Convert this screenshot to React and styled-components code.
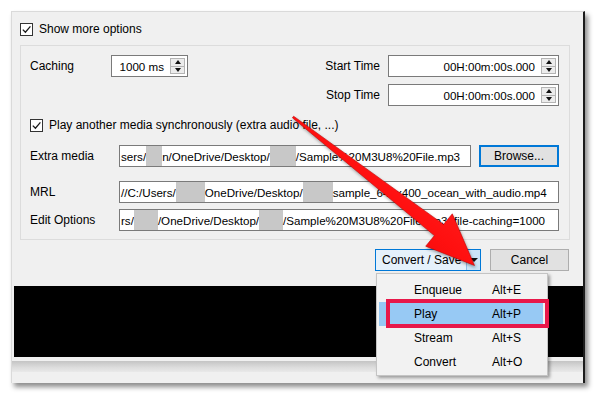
import React from 'react'
import styled, { createGlobalStyle } from 'styled-components'

const App = () => {
    return (
        <Page>
            <GlobalStyle />
            <Window>
                <OptionsRow>
                    <CheckBox checked />
                    <span>Show more options</span>
                </OptionsRow>

                <Group>
                    <TopSection>
                        <CachingRow>
                            <Label $width={81}>Caching</Label>
                            <SpinBox width={77} value='1000 ms' />
                        </CachingRow>
                        <TimeGrid>
                            <TimeLabel>Start Time</TimeLabel>
                            <SpinBox width={171} value='00H:00m:00s.000' />
                            <TimeLabel>Stop Time</TimeLabel>
                            <SpinBox width={171} value='00H:00m:00s.000' />
                        </TimeGrid>
                    </TopSection>

                    <SyncRow>
                        <CheckBox checked />
                        <span>Play another media synchronously (extra audio file, ...)</span>
                    </SyncRow>

                    <FormRow $top={13}>
                        <Label $width={89}>Extra media</Label>
                        <Field>
                            sers/<Redact $w={16} />n/OneDrive/Desktop/<Redact $w={26} />/Sample%20M3U8%20File.mp3
                        </Field>
                        <Button $focused $width={80}>Browse...</Button>
                    </FormRow>

                    <FormRow $top={14}>
                        <Label $width={89}>MRL</Label>
                        <Field>
                            //C:/Users/<Redact $w={29} />OneDrive/Desktop/<Redact $w={30} />sample_640x400_ocean_with_audio.mp4
                        </Field>
                    </FormRow>

                    <FormRow $top={6}>
                        <Label $width={89}>Edit Options</Label>
                        <Field>
                            rs/<Redact $w={24} />/OneDrive/Desktop/<Redact $w={24} />/Sample%20M3U8%20File.mp3 :file-caching=1000
                        </Field>
                    </FormRow>
                </Group>

                <ButtonRow>
                    <Dropdown>
                        <SplitButton>
                            <SplitLabel>Convert / Save</SplitLabel>
                            <SplitArrow><DownTriangle /></SplitArrow>
                        </SplitButton>
                        <Menu>
                            <MenuItem>
                                <span>Enqueue</span><span>Alt+E</span>
                            </MenuItem>
                            <MenuItem $active>
                                <span>Play</span><span>Alt+P</span>
                                <Callout />
                            </MenuItem>
                            <MenuItem>
                                <span>Stream</span><span>Alt+S</span>
                            </MenuItem>
                            <MenuItem>
                                <span>Convert</span><span>Alt+O</span>
                            </MenuItem>
                        </Menu>
                    </Dropdown>
                    <Button $width={79}>Cancel</Button>
                </ButtonRow>

                <VideoArea />
                <StatusBar />
            </Window>

            <PointerArrow />
        </Page>
    )
}

export default App


const CheckBox = ({ checked }) => (
    <Box>
        {checked && (
            <svg width='11' height='11' viewBox='0 0 11 11'>
                <path d='M1.8 5.6 L4.4 8.2 L9.4 2.4' fill='none' stroke='#1a1a1a' strokeWidth='1.3' />
            </svg>
        )}
    </Box>
)

const SpinBox = ({ width, value }) => (
    <SpinFrame style={{ width }}>
        <SpinValue>{value}</SpinValue>
        <SpinButtons>
            <SpinHalf><UpTriangle /></SpinHalf>
            <SpinHalf $bottom><DownTriangle $small /></SpinHalf>
        </SpinButtons>
    </SpinFrame>
)

// the red annotation arrow drawn over the dialog
const PointerArrow = () => (
    <ArrowLayer width='600' height='396' viewBox='0 0 600 396'>
        <defs>
            <linearGradient id='arrowFill' x1='0' y1='1' x2='1' y2='0'>
                <stop offset='0' stopColor='#d80000' />
                <stop offset='0.5' stopColor='#ff1010' />
                <stop offset='1' stopColor='#ff3030' />
            </linearGradient>
        </defs>
        <polygon
            points='293.6,116.2 443.6,224.4 452.3,213.8 474.5,265.5 425.7,246.2 434.4,235.6 292.4,117.8'
            fill='url(#arrowFill)'
            stroke='#c40000'
            strokeWidth='0.6'
            strokeLinejoin='round'
        />
    </ArrowLayer>
)


// STYLED COMPONENTS
const GlobalStyle = createGlobalStyle`
    html, body {
        margin: 0;
        padding: 0;
        background: #ffffff;
    }
    body {
        font-family: "Liberation Sans", Arial, sans-serif;
        font-size: 12px;
        color: #000;
    }
`;

const Page = styled.div`
    position: relative;
    width: 600px;
    height: 396px;
    padding: 11px 0 0 11px;
    box-sizing: border-box;
    overflow: hidden;
    background: #fff;
`;

const Window = styled.div`
    width: 574px;
    height: 372px;
    box-sizing: border-box;
    background: #f0f0f0;
    border-top: 1px solid #dadada;
    border-left: 1px solid #dadada;
    border-right: 2px solid #1c1c1c;
    box-shadow: 3px 4px 5px rgba(0,0,0,0.45);
    display: flex;
    flex-direction: column;
`;

const OptionsRow = styled.div`
    display: flex;
    align-items: center;
    gap: 6px;
    height: 22px;
    padding: 6px 0 0 8px;
`;

const Box = styled.div`
    width: 13px;
    height: 13px;
    box-sizing: border-box;
    border: 1px solid #333;
    background: #fff;
    display: flex;
    align-items: center;
    justify-content: center;
    flex-shrink: 0;
`;

const Group = styled.div`
    margin: 5px 13px 0 8px;
    height: 195px;
    box-sizing: border-box;
    border: 1px solid #dcdcdc;
    padding: 9px 10px 0 9px;
`;

const TopSection = styled.div`
    display: flex;
    justify-content: space-between;
    align-items: flex-start;
`;

const CachingRow = styled.div`
    display: flex;
    align-items: center;
    height: 22px;
`;

const Label = styled.div`
    width: ${p => p.$width}px;
    flex-shrink: 0;
`;

const TimeGrid = styled.div`
    display: grid;
    grid-template-columns: auto 171px;
    grid-auto-rows: 22px;
    column-gap: 8px;
    row-gap: 7px;
    align-items: center;
`;

const TimeLabel = styled.div`
    text-align: right;
`;

const SpinFrame = styled.div`
    height: 22px;
    box-sizing: border-box;
    border: 1px solid #7a7a7a;
    background: #fff;
    display: flex;
    align-items: stretch;
`;

const SpinValue = styled.div`
    flex: 1;
    display: flex;
    align-items: center;
    justify-content: flex-end;
    padding-right: 6px;
    font-size: 11.6px;
`;

const SpinButtons = styled.div`
    width: 13px;
    margin: 2px 2px 2px 0;
    border: 1px solid #b4b4b4;
    background: #ececec;
    display: flex;
    flex-direction: column;
`;

const SpinHalf = styled.div`
    flex: 1;
    display: flex;
    align-items: center;
    justify-content: center;
    border-top: ${p => p.$bottom ? '1px solid #b4b4b4' : 'none'};
`;

const UpTriangle = styled.div`
    width: 0;
    height: 0;
    border-left: 3px solid transparent;
    border-right: 3px solid transparent;
    border-bottom: 4px solid #111;
`;

const DownTriangle = styled.div`
    width: 0;
    height: 0;
    border-left: ${p => p.$small ? 3 : 4}px solid transparent;
    border-right: ${p => p.$small ? 3 : 4}px solid transparent;
    border-top: 4px solid #111;
`;

const SyncRow = styled.div`
    display: flex;
    align-items: center;
    gap: 6px;
    height: 14px;
    margin-top: 12px;
`;

const FormRow = styled.div`
    display: flex;
    align-items: center;
    gap: 0;
    margin-top: ${p => p.$top}px;
    height: 22px;
`;

const Field = styled.div`
    flex: 1;
    height: 22px;
    box-sizing: border-box;
    border: 1px solid #7a7a7a;
    background: #fff;
    display: flex;
    align-items: center;
    overflow: hidden;
    white-space: nowrap;
    font-size: 11.6px;
    padding-left: 1px;
`;

const Redact = styled.span`
    display: inline-block;
    flex-shrink: 0;
    width: ${p => p.$w}px;
    height: 20px;
    background: #c8c8c8;
`;

const Button = styled.div`
    width: ${p => p.$width}px;
    height: 22px;
    box-sizing: border-box;
    margin-left: ${p => p.$focused ? '8px' : '0'};
    background: #e1e1e1;
    border: ${p => p.$focused ? '2px solid #0078d7' : '1px solid #adadad'};
    display: flex;
    align-items: center;
    justify-content: center;
    flex-shrink: 0;
`;

const ButtonRow = styled.div`
    display: flex;
    justify-content: flex-end;
    gap: 9px;
    margin-top: 9px;
    padding-right: 14px;
    height: 22px;
`;

const Dropdown = styled.div`
    position: relative;
`;

const SplitButton = styled.div`
    width: 106px;
    height: 22px;
    box-sizing: border-box;
    border: 1px solid #0078d7;
    background: #e5f1fb;
    display: flex;
`;

const SplitLabel = styled.div`
    flex: 1;
    display: flex;
    align-items: center;
    padding-left: 6px;
`;

const SplitArrow = styled.div`
    width: 13px;
    border-left: 1px solid #8dbde6;
    background: #cce4f7;
    display: flex;
    align-items: center;
    justify-content: center;
`;

const Menu = styled.div`
    position: absolute;
    top: 24px;
    left: 1px;
    width: 172px;
    height: 103px;
    box-sizing: border-box;
    padding: 4px 4px 1px 2px;
    background: #f2f2f2;
    border: 1px solid #c4c4c4;
    box-shadow: 2px 2px 3px rgba(0,0,0,0.35);
    z-index: 2;
`;

const MenuItem = styled.div`
    position: relative;
    height: 24px;
    display: grid;
    grid-template-columns: 78px auto;
    align-items: center;
    padding-left: 35px;
    background: ${p => p.$active ? '#97c9f4' : 'transparent'};
`;

const Callout = styled.div`
    position: absolute;
    left: 7px;
    right: -6px;
    top: -3px;
    bottom: -2px;
    border: 4px solid #e8184a;
    box-sizing: border-box;
`;

const VideoArea = styled.div`
    margin: 15px 0 0 2px;
    height: 71px;
    background: #000;
`;

const StatusBar = styled.div`
    margin-top: 4px;
    height: 11px;
    background: linear-gradient(#c4c4c4, #dddddd 60%, #e9e9e9);
`;

const ArrowLayer = styled.svg`
    position: absolute;
    left: 0;
    top: 0;
    pointer-events: none;
    filter: drop-shadow(1px 2px 1.5px rgba(0,0,0,0.35));
    z-index: 3;
`;
